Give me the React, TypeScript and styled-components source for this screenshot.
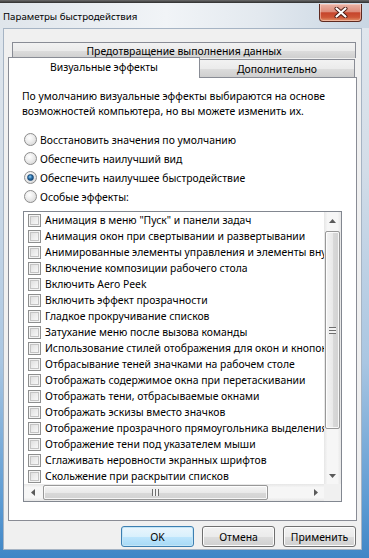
import React from "react";
import styled, { createGlobalStyle } from "styled-components";

const GlobalStyle = createGlobalStyle`
  html, body {
    margin: 0;
    padding: 0;
  }
  body {
    font-family: "Noto Sans", "Segoe UI", sans-serif;
    font-size: 10.4px;
    color: #000;
  }
`;

const effects = [
  'Анимация в меню "Пуск" и панели задач',
  "Анимация окон при свертывании и развертывании",
  "Анимированные элементы управления и элементы внутри окна",
  "Включение композиции рабочего стола",
  "Включить Aero Peek",
  "Включить эффект прозрачности",
  "Гладкое прокручивание списков",
  "Затухание меню после вызова команды",
  "Использование стилей отображения для окон и кнопок",
  "Отбрасывание теней значками на рабочем столе",
  "Отображать содержимое окна при перетаскивании",
  "Отображать тени, отбрасываемые окнами",
  "Отображать эскизы вместо значков",
  "Отображение прозрачного прямоугольника выделения",
  "Отображение тени под указателем мыши",
  "Сглаживать неровности экранных шрифтов",
  "Скольжение при раскрытии списков",
];

const modes = [
  { label: "Восстановить значения по умолчанию", checked: false },
  { label: "Обеспечить наилучший вид", checked: false },
  { label: "Обеспечить наилучшее быстродействие", checked: true },
  { label: "Особые эффекты:", checked: false },
];

const Arrow: React.FC<{ dir: "up" | "down" | "left" | "right" }> = ({ dir }) => {
  const points = {
    up: "0,4 3.5,0 7,4",
    down: "0,0 3.5,4 7,0",
    left: "4,0 0,3.5 4,7",
    right: "0,0 4,3.5 0,7",
  }[dir];
  const vertical = dir === "up" || dir === "down";
  return (
    <svg width={vertical ? 7 : 4} height={vertical ? 4 : 7}>
      <polygon points={points} fill="#5a5a5a" />
    </svg>
  );
};

const CloseIcon = () => (
  <svg width="14" height="11" viewBox="0 0 14 11">
    <path d="M2.5 1.5 L11.5 9.5 M11.5 1.5 L2.5 9.5" stroke="#4a1a12" strokeWidth="4" strokeLinecap="round" />
    <path d="M2.5 1.5 L11.5 9.5 M11.5 1.5 L2.5 9.5" stroke="#fff" strokeWidth="2.2" strokeLinecap="round" />
  </svg>
);

const App: React.FC = () => {
  return (
    <>
      <GlobalStyle />
      <Frame>
        <TopStrip />
        <TitleBar>
          <Title>Параметры быстродействия</Title>
          <CloseButton>
            <CloseIcon />
          </CloseButton>
        </TitleBar>
        <Client>
          <Tabs>
            <BackRow>
              <BackTab>Предотвращение выполнения данных</BackTab>
            </BackRow>
            <FrontRow>
              <Tab $selected $width={192}>
                Визуальные эффекты
              </Tab>
              <Tab $width={155}>Дополнительно</Tab>
            </FrontRow>
          </Tabs>
          <Panel>
            <Description>
              По умолчанию визуальные эффекты выбираются на основе
              <br />
              возможностей компьютера, но вы можете изменить их.
            </Description>
            <RadioGroup>
              {modes.map((m) => (
                <RadioRow key={m.label}>
                  <Radio $checked={m.checked} />
                  <span>{m.label}</span>
                </RadioRow>
              ))}
            </RadioGroup>
            <ListBox>
              <Rows>
                {effects.map((e) => (
                  <Row key={e}>
                    <CheckBox />
                    <RowText>{e}</RowText>
                  </Row>
                ))}
              </Rows>
              <VScroll>
                <ArrowButton>
                  <Arrow dir="up" />
                </ArrowButton>
                <VTrack>
                  <VThumb>
                    <VGrip />
                  </VThumb>
                </VTrack>
                <ArrowButton>
                  <Arrow dir="down" />
                </ArrowButton>
              </VScroll>
              <HScroll>
                <ArrowButton>
                  <Arrow dir="left" />
                </ArrowButton>
                <HTrack>
                  <HThumb>
                    <HGrip />
                  </HThumb>
                </HTrack>
                <ArrowButton>
                  <Arrow dir="right" />
                </ArrowButton>
              </HScroll>
              <Corner />
            </ListBox>
          </Panel>
          <ButtonBar>
            <Button $primary>OK</Button>
            <Button>Отмена</Button>
            <Button>Применить</Button>
          </ButtonBar>
        </Client>
      </Frame>
    </>
  );
};

export default App;

const Frame = styled.div`
  width: 369px;
  height: 558px;
  display: flex;
  flex-direction: column;
  overflow: hidden;
  background: linear-gradient(
    to bottom,
    #e2e8ee 0%,
    #d3dde8 30%,
    #a9c6e2 65%,
    #5d9bd3 90%,
    #3f86c6 100%
  );
`;

const TopStrip = styled.div`
  height: 3px;
  flex-shrink: 0;
  background: linear-gradient(to bottom, #6b6b6b, #2e2e2e);
`;

const TitleBar = styled.div`
  height: 25px;
  flex-shrink: 0;
  display: flex;
  justify-content: space-between;
  align-items: flex-start;
  background: linear-gradient(to right, #dfe5eb 0%, #f1f4f7 45%, #e3e9ef 70%, #c9d6e3 100%);
`;

const Title = styled.div`
  padding: 7px 0 0 3px;
  font-size: 9.7px;
  line-height: 14px;
  color: #000;
`;

const CloseButton = styled.div`
  width: 43px;
  height: 18px;
  margin: 1px 7px 0 0;
  box-sizing: border-box;
  border: 1px solid #5e2a20;
  border-top: none;
  border-radius: 0 0 4px 4px;
  display: flex;
  align-items: center;
  justify-content: center;
  background: linear-gradient(
    to bottom,
    #eab3a6 0%,
    #dd8d7b 45%,
    #c6452c 52%,
    #cd5536 78%,
    #e3956c 100%
  );
  box-shadow: inset 0 0 0 1px rgba(255, 220, 210, 0.5);
`;

const Client = styled.div`
  flex: 1;
  min-height: 0;
  margin: 0 7px 8px 3px;
  border: 1px solid #a6b4c4;
  background: #f0f0f0;
  padding: 13px 4px 0 4px;
  display: flex;
  flex-direction: column;
`;

const Tabs = styled.div`
  display: flex;
  flex-direction: column;
`;

const BackRow = styled.div`
  display: flex;
  padding: 0 1px 0 4px;
`;

const tabFace = `
  background: linear-gradient(to bottom, #f2f2f2 0%, #ebebeb 50%, #dddddd 51%, #cfcfcf 100%);
  border: 1px solid #898c95;
`;

const BackTab = styled.div`
  flex: 1;
  height: 16px;
  box-sizing: border-box;
  ${tabFace}
  border-bottom: none;
  text-align: center;
  line-height: 17px;
`;

const FrontRow = styled.div`
  display: flex;
  align-items: flex-end;
  margin-top: -1px;
`;

const Tab = styled.div<{ $selected?: boolean; $width: number }>`
  width: ${(p) => p.$width}px;
  box-sizing: border-box;
  text-align: center;
  position: relative;
  z-index: ${(p) => (p.$selected ? 2 : 1)};
  margin-bottom: -1px;
  ${(p) =>
    p.$selected
      ? `
    height: 21px;
    background: #fff;
    border: 1px solid #898c95;
    border-bottom: none;
    line-height: 15px;
    padding: 2px 0 2px;
  `
      : `
    height: 19px;
    ${tabFace}
    border-left: none;
    line-height: 19px;
  `}
`;

const Panel = styled.div`
  position: relative;
  z-index: 1;
  background: #fff;
  border: 1px solid #898c95;
  padding: 11px 13px 18px 13px;
`;

const Description = styled.div`
  line-height: 15px;
  white-space: nowrap;
`;

const RadioGroup = styled.div`
  margin: 11px 0 5px 2px;
  display: flex;
  flex-direction: column;
`;

const RadioRow = styled.div`
  height: 19px;
  display: flex;
  align-items: center;
  gap: 3px;
`;

const Radio = styled.div`
  width: 11px;
  height: 11px;
  border-radius: 50%;
  border: 1px solid #8c8c8c;
  background: radial-gradient(circle at 40% 35%, #ffffff 0%, #ececec 45%, #cfcfcf 100%);
  display: flex;
  align-items: center;
  justify-content: center;
  flex-shrink: 0;
  &::after {
    content: "";
    display: ${(p: { $checked?: boolean }) => (p.$checked ? "block" : "none")};
    width: 5px;
    height: 5px;
    border-radius: 50%;
    background: radial-gradient(circle at 40% 35%, #8fd0f4 0%, #2a6fa8 45%, #0d3a66 100%);
    border: 1px solid #1c4a78;
  }
`;

const ListBox = styled.div`
  margin: 0 1px;
  border: 1px solid #828790;
  display: grid;
  grid-template-columns: 1fr 17px;
  grid-template-rows: 272px 17px;
  background: #fff;
`;

const Rows = styled.div`
  overflow: hidden;
  display: flex;
  flex-direction: column;
`;

const Row = styled.div`
  height: 16px;
  display: flex;
  align-items: center;
  padding-left: 4px;
  gap: 4px;
  white-space: nowrap;
`;

const CheckBox = styled.div`
  width: 13px;
  height: 13px;
  box-sizing: border-box;
  border: 1px solid #8e8f8f;
  background: linear-gradient(135deg, #d8d8d8 0%, #f0f0f0 60%, #fdfdfd 100%);
  box-shadow: inset 0 0 0 1px #f4f4f4, inset 0 0 0 2px #c4c4c4;
  flex-shrink: 0;
`;

const RowText = styled.span`
  line-height: 16px;
`;

const ArrowButton = styled.div`
  width: 17px;
  height: 17px;
  display: flex;
  align-items: center;
  justify-content: center;
  flex-shrink: 0;
`;

const VScroll = styled.div`
  display: flex;
  flex-direction: column;
  background: linear-gradient(to right, #e6e6e6 0%, #f6f6f6 20%, #f6f6f6 80%, #e6e6e6 100%);
`;

const VTrack = styled.div`
  flex: 1;
  display: flex;
  flex-direction: column;
  padding-top: 2px;
`;

const VThumb = styled.div`
  height: 198px;
  margin: 0 1px;
  box-sizing: border-box;
  border: 1px solid #989898;
  border-radius: 2px;
  background: linear-gradient(to right, #f4f4f4 0%, #e9e9e9 50%, #d9d9d9 51%, #d2d2d2 100%);
  box-shadow: inset 0 0 0 1px rgba(255, 255, 255, 0.8);
  display: flex;
  align-items: center;
  justify-content: center;
`;

const VGrip = styled.div`
  width: 7px;
  height: 7px;
  background: repeating-linear-gradient(
    to bottom,
    #6e6e6e 0px,
    #6e6e6e 1px,
    #f2f2f2 1px,
    #f2f2f2 3px
  );
`;

const HScroll = styled.div`
  display: flex;
  background: linear-gradient(to bottom, #e6e6e6 0%, #f6f6f6 20%, #f6f6f6 80%, #e6e6e6 100%);
`;

const HTrack = styled.div`
  flex: 1;
  display: flex;
  padding-left: 2px;
`;

const HThumb = styled.div`
  width: 225px;
  margin: 1px 0;
  box-sizing: border-box;
  border: 1px solid #989898;
  border-radius: 2px;
  background: linear-gradient(to bottom, #f4f4f4 0%, #e9e9e9 50%, #d9d9d9 51%, #d2d2d2 100%);
  box-shadow: inset 0 0 0 1px rgba(255, 255, 255, 0.8);
  display: flex;
  align-items: center;
  justify-content: center;
`;

const HGrip = styled.div`
  width: 7px;
  height: 7px;
  background: repeating-linear-gradient(
    to right,
    #6e6e6e 0px,
    #6e6e6e 1px,
    #f2f2f2 1px,
    #f2f2f2 3px
  );
`;

const Corner = styled.div`
  background: #f0f0f0;
`;

const ButtonBar = styled.div`
  display: flex;
  justify-content: flex-end;
  gap: 8px;
  padding: 5px 1px 0 0;
`;

const Button = styled.div<{ $primary?: boolean }>`
  width: 73px;
  height: 21px;
  box-sizing: border-box;
  border-radius: 3px;
  display: flex;
  align-items: center;
  justify-content: center;
  font-size: 10.4px;
  border: 1px solid ${(p) => (p.$primary ? "#3c7fb1" : "#707070")};
  background: ${(p) =>
    p.$primary
      ? "linear-gradient(to bottom, #eaf6fd 0%, #d9f0fc 50%, #bee6fd 51%, #a7d9f5 100%)"
      : "linear-gradient(to bottom, #f2f2f2 0%, #ebebeb 50%, #dddddd 51%, #cfcfcf 100%)"};
  box-shadow: inset 0 0 0 1px ${(p) => (p.$primary ? "#c4e5f6" : "#fcfcfc")};
`;
